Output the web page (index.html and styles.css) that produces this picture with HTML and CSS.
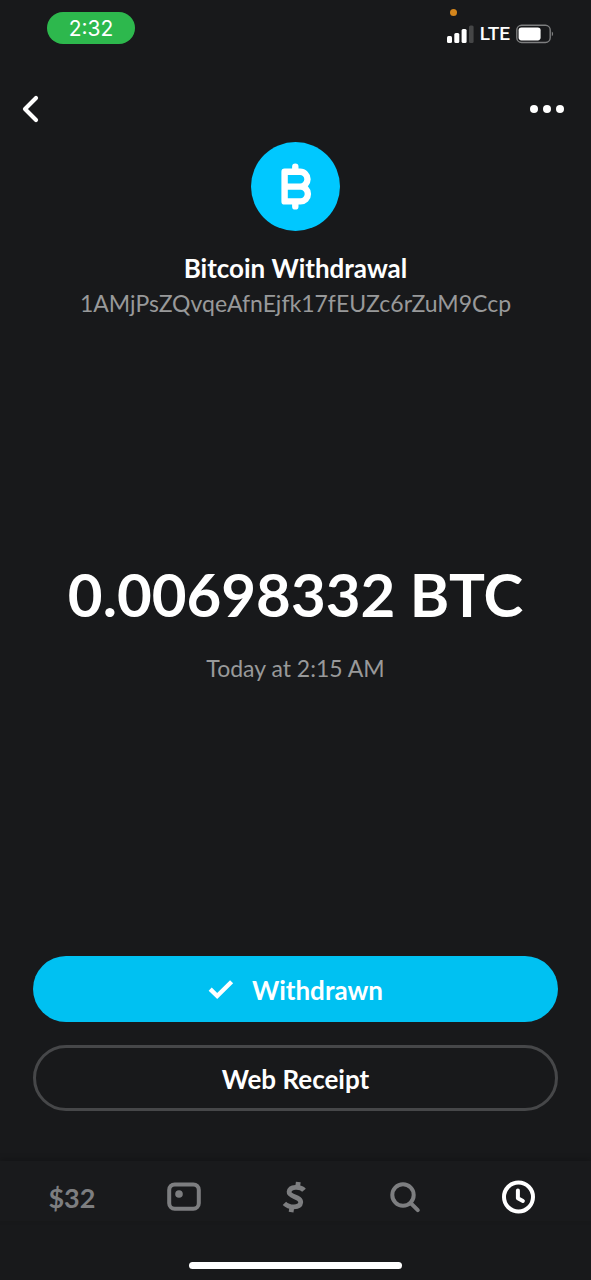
FILE: index.html
```html
<!DOCTYPE html>
<html lang="en">
<head>
<meta charset="utf-8">
<meta name="viewport" content="width=device-width, initial-scale=1">
<title>Bitcoin Withdrawal</title>
<link rel="stylesheet" href="styles.css">
</head>
<body>
<div class="app">
  <div class="status-bar">
    <span class="clock">2:32</span>
    <div class="status-icons">
      <span class="mic-dot"></span>
      <svg class="signal" width="27" height="18" viewBox="0 0 27 18" fill="#fff" aria-hidden="true">
        <rect x="0" y="11" width="5" height="7" rx="1.5"/>
        <rect x="7.3" y="8" width="5" height="10" rx="1.5"/>
        <rect x="14.6" y="4" width="5" height="14" rx="1.5"/>
        <rect x="22" y="0.5" width="4.6" height="17.5" rx="1.5" fill="#454647"/>
      </svg>
      <span class="network">LTE</span>
      <svg width="38" height="20" viewBox="0 0 38 20" aria-hidden="true">
        <rect x="0.8" y="1.3" width="33.4" height="17.2" rx="4.8" fill="none" stroke="#7d7e7f" stroke-width="1.4"/>
        <rect x="2.6" y="3.4" width="22" height="13" rx="2.8" fill="#fff"/>
        <path d="M35.8 7.5c1.8.8 1.8 4 0 4.8z" fill="#7d7e7f"/>
      </svg>
    </div>
  </div>

  <header class="top-bar">
    <button class="icon-button" type="button" aria-label="Back">
      <svg width="18" height="28" viewBox="0 0 18 28" fill="none" stroke="#fff" stroke-width="4.2" stroke-linecap="round" stroke-linejoin="round"><path d="M14 3 3 14 14 25"/></svg>
    </button>
    <button class="icon-button" type="button" aria-label="More options">
      <svg width="36" height="10" viewBox="0 0 36 10" fill="#fff"><circle cx="5" cy="5" r="4"/><circle cx="18" cy="5" r="4"/><circle cx="31" cy="5" r="4"/></svg>
    </button>
  </header>

  <main class="content">
    <section class="summary">
      <svg class="avatar" viewBox="0 0 89 89" aria-hidden="true">
        <circle cx="44.5" cy="44.5" r="44.5" fill="#00c8ff"/>
        <g fill="none" stroke="#fff" stroke-width="6.4" stroke-linecap="round" stroke-linejoin="round">
          <path d="M33.6 29.8H49.1a7.4 7.4 0 0 1 0 14.8H33.6M49.5 44.6a7.4 7.4 0 0 1 0 14.8H33.6V29.8"/>
          <path d="M44.3 24.8v4M44.3 60.4v4"/>
        </g>
      </svg>
      <h1 class="title">Bitcoin Withdrawal</h1>
      <p class="address">1AMjPsZQvqeAfnEjfk17fEUZc6rZuM9Ccp</p>
    </section>

    <section class="amount-block">
      <p class="amount">0.00698332 BTC</p>
      <p class="date">Today at 2:15 AM</p>
    </section>

    <div class="actions">
      <button class="pill pill-primary" type="button">
        <svg width="26" height="20" viewBox="0 0 26 20" fill="none" stroke="#fff" stroke-width="4.4" stroke-linejoin="miter"><path d="M2.2 9.2 9.2 16 23.6 1.8"/></svg>
        Withdrawn
      </button>
      <button class="pill pill-outline" type="button">Web Receipt</button>
    </div>
  </main>

  <nav class="tab-bar">
    <a class="tab" href="#balance">$32</a>
    <a class="tab" href="#card" aria-label="Card">
      <svg width="34" height="36" viewBox="0 0 34 36" fill="none" stroke="currentColor" stroke-width="4"><rect x="2.2" y="5.4" width="29.6" height="24.4" rx="5.5"/><circle cx="12" cy="15" r="3.8" fill="currentColor" stroke="none"/></svg>
    </a>
    <a class="tab" href="#pay" aria-label="Pay">
      <svg width="26" height="36" viewBox="0 0 26 36" fill="none" stroke="currentColor" stroke-width="4.8"><path d="M22 11.2C18.6 7.2 7.8 7 7.1 12.8 6.5 18.2 19.4 17.3 18.7 23.6 18 29.4 7 29 2.4 24.4"/><path d="M15.4 9.4 16.3 3M9.1 33.2 10 27"/></svg>
    </a>
    <a class="tab" href="#search" aria-label="Search">
      <svg width="34" height="36" viewBox="0 0 34 36" fill="none" stroke="currentColor" stroke-width="4"><circle cx="13" cy="16" r="10.7"/><path d="m20.5 23.8 7.3 7.4" stroke-linecap="round"/></svg>
    </a>
    <a class="tab tab-active" href="#activity" aria-label="Activity" aria-current="page">
      <svg width="34" height="36" viewBox="0 0 34 36" fill="none" stroke="currentColor" stroke-width="4"><circle cx="16.5" cy="18" r="14.5"/><path d="M15.9 11.6v7.7l5 2.6" stroke-linecap="round" stroke-linejoin="round"/></svg>
    </a>
  </nav>
  <div class="home-indicator"></div>
</div>
</body>
</html>
```
FILE: styles.css
```css
* {
  box-sizing: border-box;
}

body {
  margin: 0;
  background: #18191b;
  color: #fff;
  font-family: Lato, "Liberation Sans", sans-serif;
}

h1,
p {
  margin: 0;
}

button {
  padding: 0;
  border: 0;
  background: none;
  color: inherit;
  font: inherit;
  cursor: pointer;
}

svg {
  display: block;
}

.app {
  display: flex;
  flex-direction: column;
  min-height: 100vh;
}

.status-bar {
  display: flex;
  justify-content: space-between;
  padding: 12px 37px 0 47px;
}

.clock {
  width: 88px;
  border-radius: 16px;
  background: #2db84d;
  font: 400 21px/34px Inter, sans-serif;
  height: 32px;
  text-align: center;
}

.status-icons {
  position: relative;
  display: flex;
  align-items: center;
  gap: 6px;
  padding-top: 12px;
}

.mic-dot {
  position: absolute;
  top: -3px;
  left: 3px;
  width: 7px;
  height: 7px;
  border-radius: 50%;
  background: #d4851c;
}

.network {
  font: 500 19px/20px Roboto, sans-serif;
}

.top-bar {
  display: flex;
  align-items: center;
  justify-content: space-between;
  padding: 44px 26px 0 22px;
}

.icon-button {
  display: flex;
  align-items: center;
  height: 42px;
}

.content {
  flex: 1;
  display: flex;
  flex-direction: column;
  padding: 12px 33px 50px;
}

.summary {
  text-align: center;
}

.avatar {
  width: 89px;
  height: 89px;
  margin: 0 auto 20px;
}

.title {
  font-size: 26px;
  line-height: 34px;
}

.address {
  font-size: 23px;
  line-height: 36px;
  color: #98999a;
}

.amount-block {
  flex: 1;
  display: flex;
  flex-direction: column;
  justify-content: center;
  gap: 20px;
  padding-bottom: 34px;
  text-align: center;
}

.amount {
  font-size: 60px;
  font-weight: 700;
  line-height: 72px;
}

.date {
  font-size: 23px;
  line-height: 36px;
  color: #98999a;
}

.actions {
  display: grid;
  gap: 23px;
}

.pill {
  display: flex;
  align-items: center;
  justify-content: center;
  gap: 18px;
  height: 66px;
  padding-top: 2px;
  border-radius: 33px;
  font-size: 26px;
  font-weight: 700;
}

.pill-primary {
  background: #00c1f2;
}

.pill-outline {
  border: 3px solid #464749;
}

.tab-bar {
  display: grid;
  grid-template-columns: repeat(5, 1fr);
  padding: 12px 16px 0;
  background: #191a1c;
  box-shadow: 0 -2px 6px rgba(0, 0, 0, 0.2);
}

.tab {
  display: flex;
  align-items: center;
  justify-content: center;
  height: 48px;
  color: #7d7e80;
  font-size: 27px;
  font-weight: 700;
  text-decoration: none;
}

.tab-active {
  color: #fff;
}

.home-indicator {
  width: 36%;
  height: 7px;
  margin: 41px auto 11px;
  border-radius: 4px;
  background: #fff;
}
```
